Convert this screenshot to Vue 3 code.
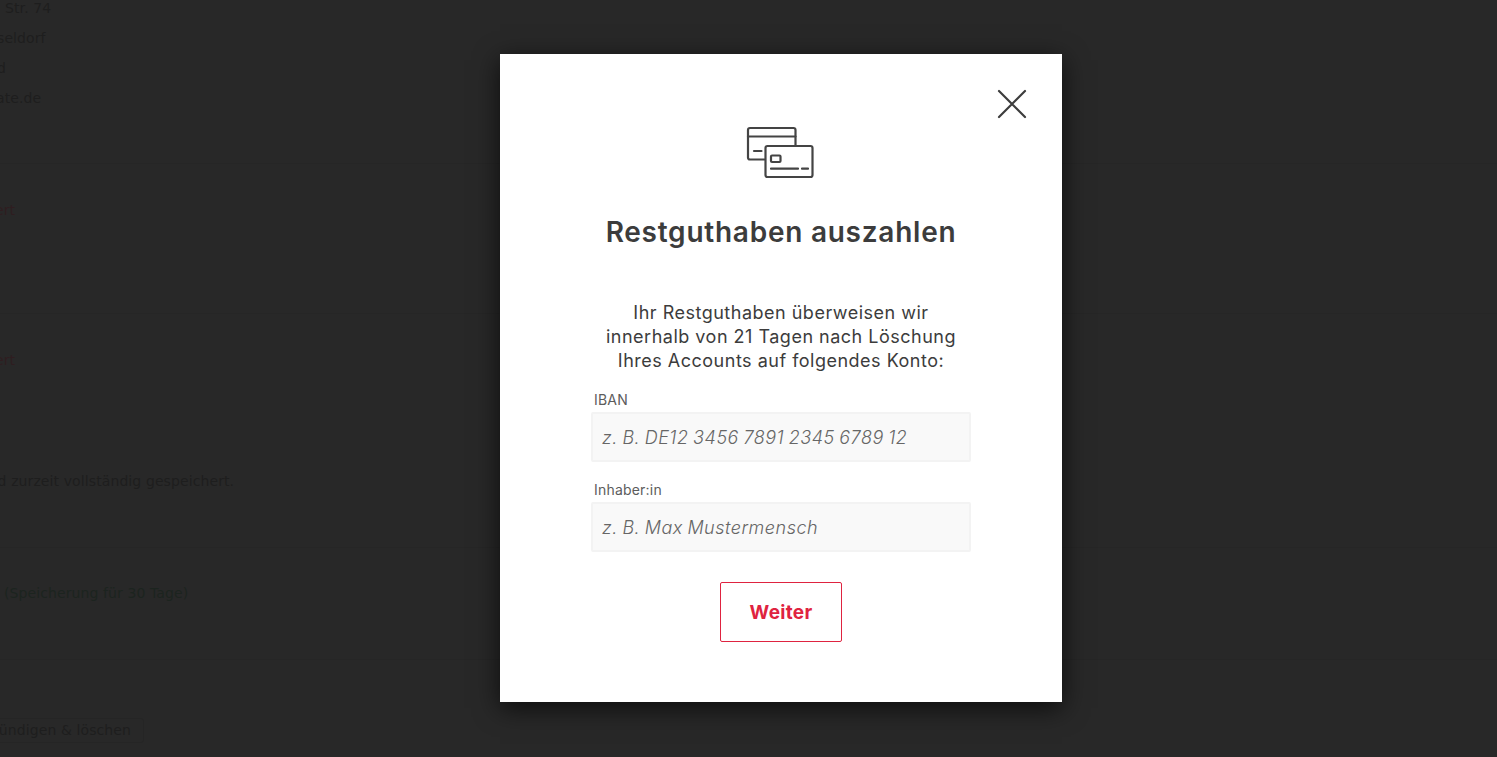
<script setup>
const fields = [
  { label: 'IBAN', placeholder: 'z. B. DE12 3456 7891 2345 6789 12' },
  { label: 'Inhaber:in', placeholder: 'z. B. Max Mustermensch' },
]
</script>

<template>
  <div class="screen">
    <main class="page">
      <section class="address">
        <p class="indent">Str. 74</p>
        <p class="cut-seldorf">seldorf</p>
        <p class="cut-d">d</p>
        <p class="cut-ate">ate.de</p>
      </section>
      <section class="status first"><p class="red">ert</p></section>
      <section class="status second"><p class="red">ert</p></section>
      <section class="stored"><p>rd zurzeit vollständig gespeichert.</p></section>
      <section class="retention"><p class="green">(Speicherung für 30 Tage)</p></section>
      <section class="actions"><span class="ghost-btn">kündigen &amp; löschen</span></section>
    </main>

    <div class="overlay">
      <div class="modal">
        <button class="close" type="button" aria-label="Schließen">
          <svg width="30" height="30" viewBox="0 0 30 30" fill="none" stroke="#3d3d3d" stroke-width="2.2" stroke-linecap="round">
            <path d="M2 2 L28 28 M28 2 L2 28" />
          </svg>
        </button>
        <svg class="cards" width="80" height="56" viewBox="0 0 80 56" fill="none" stroke="#444" stroke-width="2.2" stroke-linecap="round" stroke-linejoin="round">
          <path d="M23.5 35.5 H9 Q7 35.5 7 33.5 V6 Q7 4 9 4 H52.5 Q54.5 4 54.5 6 V21" />
          <path d="M7 12.5 H54.5" />
          <path d="M13 27 H20.5" />
          <rect x="24.5" y="22" width="47" height="31" rx="2" />
          <rect x="30" y="31.5" width="9.5" height="6.5" rx="1" />
          <path d="M30 44.7 H57 M61 44.7 H67" />
        </svg>
        <h2 class="title">Restguthaben auszahlen</h2>
        <p class="intro">Ihr Restguthaben überweisen wir<br />innerhalb von 21 Tagen nach Löschung<br />Ihres Accounts auf folgendes Konto:</p>
        <form class="form" @submit.prevent>
          <label v-for="f in fields" :key="f.label" class="field">
            <span class="label">{{ f.label }}</span>
            <input class="input" type="text" :placeholder="f.placeholder" />
          </label>
          <button class="next" type="submit">Weiter</button>
        </form>
      </div>
    </div>
  </div>
</template>

<style>
html, body { margin: 0; height: 100%; overflow: hidden; background: #282828; }
</style>

<style scoped>
.screen {
  position: relative;
  width: 1497px;
  height: 757px;
  overflow: hidden;
  background: #282828;
}
.page {
  font-family: "DejaVu Sans", sans-serif;
  font-size: 14px;
  line-height: 30px;
  letter-spacing: 0.1px;
  color: #1e1e1e;
}
.page p { margin: 0; white-space: nowrap; }
.address { margin-top: -7px; }
.indent { padding-left: 5px; }
.page .cut-seldorf { margin-left: -3px; }
.page .cut-d { margin-left: -3px; }
.page .cut-ate { margin-left: -4px; }
.status { border-top: 1px solid #262626; padding-top: 31px; }
.status.first { margin-top: 50px; }
.status.second { margin-top: 88px; }
.page .red { color: #2f1d20; margin-left: -5px; }
.stored { margin-top: 91px; }
.page .stored p { margin-left: -8px; }
.retention { margin-top: 51px; padding-top: 30px; border-top: 1px solid #262626; }
.page .green { color: #1c241f; margin-left: 4px; }
.actions { display: flex; margin-top: 51px; padding-top: 58px; border-top: 1px solid #262626; }
.ghost-btn {
  margin-left: -22px;
  padding: 0 12px;
  height: 23px;
  line-height: 23px;
  border: 1px solid #252525;
  border-radius: 3px;
  white-space: nowrap;
}
.overlay {
  position: absolute;
  top: 54px;
  left: 500px;
}
.modal {
  position: relative;
  box-sizing: border-box;
  width: 562px;
  height: 648px;
  padding-top: 70px;
  background: #fff;
  box-shadow: 0 6px 24px rgba(0, 0, 0, 0.7);
  display: flex;
  flex-direction: column;
  align-items: center;
  font-family: Inter, "Liberation Sans", sans-serif;
  color: #3c3c3c;
}
.close {
  position: absolute;
  top: 35px;
  right: 35px;
  width: 30px;
  height: 30px;
  padding: 0;
  border: 0;
  background: none;
  display: block;
}
.close svg, .cards { display: block; }
.title {
  margin: 34px 0 0;
  font-size: 28px;
  line-height: 36px;
  font-weight: 600;
  letter-spacing: 0.75px;
}
.intro {
  margin: 51px 0 0;
  font-size: 18px;
  line-height: 24px;
  letter-spacing: 0.5px;
  text-align: center;
}
.form {
  margin-top: 17px;
  width: 380px;
  display: flex;
  flex-direction: column;
  align-items: center;
}
.field {
  display: flex;
  flex-direction: column;
  width: 100%;
  margin-bottom: 18px;
}
.label {
  padding: 1px 0 0 3px;
  margin-bottom: 3px;
  font-size: 14px;
  line-height: 18px;
  letter-spacing: 0.2px;
  color: #5c5c5c;
}
.input {
  box-sizing: border-box;
  width: 100%;
  height: 50px;
  padding: 0 9px;
  background: #f9f9f9;
  border: 2px solid #f3f3f3;
  border-radius: 2px;
  outline: none;
  font-family: inherit;
  font-size: 18px;
  font-style: italic;
  font-weight: 300;
  letter-spacing: 0.5px;
  word-spacing: -1px;
  color: #666;
}
.input::placeholder { color: #666; opacity: 1; }
.next {
  margin-top: 12px;
  box-sizing: border-box;
  width: 122px;
  height: 60px;
  background: #fff;
  border: 1px solid #df2340;
  border-radius: 2px;
  font-family: inherit;
  font-size: 19px;
  font-weight: 700;
  letter-spacing: 0.3px;
  color: #df2340;
}
</style>
